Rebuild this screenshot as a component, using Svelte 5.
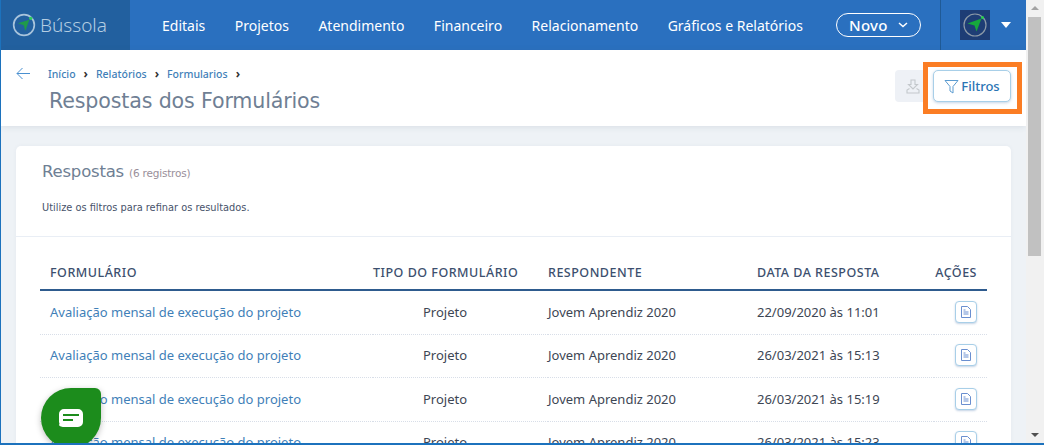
<script>
	const nav = ['Editais', 'Projetos', 'Atendimento', 'Financeiro', 'Relacionamento', 'Gráficos e Relatórios'];
	const rows = [
		{ data: '22/09/2020 às 11:01' },
		{ data: '26/03/2021 às 15:13' },
		{ data: '26/03/2021 às 15:19' },
		{ data: '26/03/2021 às 15:23' }
	];
</script>

<div class="window">
	<div class="page">
		<header class="topbar">
			<div class="brand">
				<svg width="24" height="24" viewBox="0 0 36 36" fill="none">
					<circle cx="18" cy="18" r="15.500" stroke="#a9c4dc" stroke-width="2.500" />
					<path d="M9 15.500 26 10 20 27 17.500 18.500Z" fill="#1f9a4a" />
					<circle cx="28" cy="8" r="2.500" fill="#2ecc5c" />
				</svg>
				<span>Bússola</span>
			</div>
			<nav>
				{#each nav as item}
					<span>{item}</span>
				{/each}
			</nav>
			<button class="novo">Novo
				<svg width="10" height="6" viewBox="0 0 10 6" fill="none"><path d="M1 1l4 3.500L9 1" stroke="#fff" stroke-width="1.500" /></svg>
			</button>
			<div class="user">
				<div class="avatar">
					<svg width="24" height="24" viewBox="0 0 24 24" fill="none">
						<circle cx="12" cy="12" r="11" stroke="#8d9aa8" stroke-width="1.200" />
						<path d="M4.500 10.500 18.500 5.500 13.500 18.500 11.500 12.500Z" fill="#16a83c" />
						<circle cx="19.500" cy="4.500" r="1.500" fill="#26d04c" />
					</svg>
				</div>
				<i class="caret"></i>
			</div>
		</header>

		<section class="subheader">
			<svg class="back" width="14" height="13" viewBox="0 0 14 13" fill="none"><path d="M6.500 1 1 6.500 6.500 12M1 6.500h13" stroke="#4a90d0" stroke-width="1" /></svg>
			<div class="heading">
				<div class="crumbs">
					<a>Início</a><b>›</b><a>Relatórios</a><b>›</b><a>Formularios</a><b>›</b>
				</div>
				<h1>Respostas dos Formulários</h1>
			</div>
			<div class="tools">
				<button class="download" aria-label="Baixar">
					<svg width="14" height="15" viewBox="0 0 14 15" fill="none" stroke="#c4c8cc" stroke-width="1.100">
						<path d="M5 1h4v4.500h2.500L7 10 2.500 5.500H5ZM3.500 9.500 1 11v3h12v-3l-2.500-1.500" />
					</svg>
				</button>
				<div class="highlight">
					<button class="filtros">
						<svg width="15" height="15" viewBox="0 0 15 15" fill="none" stroke="#5b9bd0" stroke-width="1"><path d="M1 1.500h13L9 7.500V14l-3-2V7.500Z" /></svg>
						Filtros
					</button>
				</div>
			</div>
		</section>

		<section class="card">
			<div class="card-head">
				<h2>Respostas <small>(6 registros)</small></h2>
				<p>Utilize os filtros para refinar os resultados.</p>
			</div>
			<div class="card-body">
				<table>
					<thead>
						<tr>
							<th class="c-form">FORMULÁRIO</th>
							<th class="c-tipo">TIPO DO FORMULÁRIO</th>
							<th class="c-resp">RESPONDENTE</th>
							<th class="c-data">DATA DA RESPOSTA</th>
							<th class="c-acao">AÇÕES</th>
						</tr>
					</thead>
					<tbody>
						{#each rows as row}
							<tr>
								<td><a>Avaliação mensal de execução do projeto</a></td>
								<td class="center">Projeto</td>
								<td>Jovem Aprendiz 2020</td>
								<td>{row.data}</td>
								<td class="right">
									<button class="doc" aria-label="Ver">
										<svg width="10" height="12" viewBox="0 0 10 12" fill="none" stroke="#6a8fd0" stroke-width="1">
											<path d="M.5.5h6l3 3v8h-9ZM2.500 6h5M2.500 8h5M2.500 4h2" />
										</svg>
									</button>
								</td>
							</tr>
						{/each}
					</tbody>
				</table>
			</div>
		</section>

		<button class="chat" aria-label="Chat">
			<svg width="24" height="18" viewBox="0 0 24 18"><path d="M5 0h14a5 5 0 0 1 5 5v8a5 5 0 0 1-5 5H6Q1 18 0 16q1-1 0-3V5a5 5 0 0 1 5-5Z" fill="#fff" /><path d="M4 6h16M4 11h10" stroke="#1c8c1c" stroke-width="2" /></svg>
		</button>
	</div>

	<div class="scrollbar">
		<i class="up"></i>
		<div class="thumb"></div>
		<i class="down"></i>
	</div>
</div>

<style>
	:global(body) {
		margin: 0;
		background: #eef2f6;
	}

	.window {
		width: 1044px;
		height: 445px;
		box-sizing: border-box;
		border-left: 1px solid #1c72bd;
		border-bottom: 2px solid #1c72bd;
		display: flex;
		overflow: hidden;
		font-family: "Noto Sans", sans-serif;
	}

	.page {
		flex: 1;
		min-width: 0;
		background: #eef2f6;
		position: relative;
		overflow: hidden;
	}

	.topbar {
		height: 50px;
		background: #2a70bf;
		display: flex;
		align-items: center;
		color: #fff;
		white-space: nowrap;
	}

	.brand {
		width: 129px;
		height: 50px;
		flex: none;
		background: #22609f;
		display: flex;
		align-items: center;
		gap: 4px;
		padding-left: 11px;
		box-sizing: border-box;
		color: #b4cde2;
		font-size: 19px;
		font-weight: 300;
	}

	nav {
		display: flex;
		gap: 29.500px;
		margin-left: 32px;
		font-size: 14px;
	}

	.novo {
		margin-left: 33px;
		width: 85px;
		height: 24px;
		flex: none;
		border: 1px solid #fff;
		border-radius: 12px;
		background: none;
		color: #fff;
		font: 500 15px "Noto Sans", sans-serif;
		letter-spacing: 0.3px;
		display: flex;
		align-items: center;
		justify-content: center;
		gap: 10px;
		padding: 0;
	}

	.user {
		margin-left: 19px;
		height: 50px;
		flex: 1;
		border-left: 1px solid #1f5a96;
		display: flex;
		align-items: center;
		padding-left: 19px;
		gap: 11px;
	}

	.avatar {
		width: 30px;
		height: 30px;
		background: #1e3d75;
		display: flex;
		align-items: center;
		justify-content: center;
	}

	.caret {
		border: 5.500px solid transparent;
		border-top: 6px solid #fff;
		border-bottom: 0;
	}

	.subheader {
		height: 76px;
		background: #fff;
		box-shadow: 0 1px 6px rgba(60, 80, 110, 0.12);
		display: flex;
		position: relative;
	}

	.back {
		margin: 17px 0 0 15px;
	}

	.heading {
		margin-left: 18px;
	}

	.crumbs {
		margin-top: 17px;
		font-size: 10.500px;
		line-height: 14px;
		display: flex;
		align-items: center;
	}

	.crumbs a {
		color: #3f7fb8;
		font-weight: 500;
	}

	.crumbs b {
		margin: 0 8px;
		font-size: 12px;
		line-height: 12px;
		color: #333;
	}

	h1 {
		margin: 8px 0 0 1px;
		font: 400 20.600px "DejaVu Sans", sans-serif;
		letter-spacing: -0.15px;
		color: #6f7f94;
	}

	.tools {
		margin-left: auto;
		margin-right: 4px;
		display: flex;
		align-items: flex-start;
		margin-top: 12px;
	}

	.download {
		width: 35px;
		height: 32px;
		margin-top: 8px;
		margin-right: -7px;
		background: #eef1f6;
		border: 0;
		border-radius: 4px;
		padding: 0;
		display: flex;
		align-items: center;
		justify-content: center;
	}

	.highlight {
		position: relative;
		background: #fff;
		border: 5px solid #fb7d24;
		padding: 3px 5px 7px;
		box-sizing: content-box;
		width: 79px;
		height: 32px;
	}

	.filtros {
		width: 78px;
		height: 32px;
		background: #fff;
		border: 1px solid #a8cfe8;
		border-radius: 5px;
		box-shadow: 0 1px 3px rgba(60, 110, 170, 0.3);
		color: #2a74b4;
		font: 500 13px "Noto Sans", sans-serif;
		display: flex;
		align-items: center;
		justify-content: center;
		gap: 2px;
		padding: 0;
	}

	.card {
		margin: 20px 15px 0;
		background: #fff;
		border-radius: 5px;
		box-shadow: 0 0 4px rgba(60, 80, 110, 0.05);
	}

	.card-head {
		height: 91px;
		box-sizing: border-box;
		padding: 16px 26px 0;
		border-bottom: 1px solid #e9eef5;
	}

	h2 {
		margin: 0;
		font: 400 16.500px "DejaVu Sans", sans-serif;
		letter-spacing: -0.2px;
		color: #6f7f94;
	}

	small {
		font: 400 10.500px "DejaVu Sans", sans-serif;
		color: #998f9a;
	}

	.card-head p {
		margin: 21px 0 0;
		font: 400 9.800px "DejaVu Sans", sans-serif;
		color: #47526a;
	}

	.card-body {
		padding: 16px 24px 0;
	}

	table {
		width: 100%;
		border-collapse: collapse;
		font-size: 13px;
		color: #3d4654;
	}

	th {
		height: 34px;
		padding: 2px 0 0;
		text-align: left;
		font: 500 12.500px "Noto Sans", sans-serif;
		letter-spacing: 0.5px;
		color: #3c4f6e;
		border-bottom: 2px solid #2e5b8e;
	}

	.c-form { width: 333px; padding-left: 10px; box-sizing: border-box; }
	.c-tipo { width: 175px; }
	.c-resp { width: 209px; }
	.c-data { width: 177px; }
	.c-acao { text-align: right; padding-right: 10px; }

	td {
		height: 41.500px;
		padding: 0 0 1px;
		border-bottom: 1px dotted #d8dee8;
	}

	td:first-child {
		padding-left: 10px;
	}

	td a {
		color: #3f7fb8;
	}

	.center {
		padding-left: 50px;
		box-sizing: border-box;
	}

	.right {
		text-align: right;
		padding-right: 10px;
	}

	.doc {
		width: 22px;
		height: 22px;
		background: #fff;
		border: 1px solid #a8cfe8;
		border-radius: 4px;
		box-shadow: 0 1px 2px rgba(60, 110, 170, 0.3);
		padding: 0;
		display: inline-flex;
		align-items: center;
		justify-content: center;
		vertical-align: middle;
	}

	.chat {
		position: absolute;
		left: 40px;
		top: 388px;
		width: 60px;
		height: 60px;
		padding: 0;
		border: 0;
		background: #1c8c1c;
		border-radius: 50% 6px 50% 50%;
		box-shadow: 0 2px 6px rgba(0, 0, 0, 0.25);
		display: flex;
		align-items: center;
		justify-content: center;
	}

	.scrollbar {
		width: 18px;
		background: #f1f1f1;
		position: relative;
		flex: none;
		display: flex;
		flex-direction: column;
		align-items: center;
	}

	.thumb {
		width: 13px;
		margin-right: 1px;
		height: 239px;
		background: #c1c1c1;
		margin-top: 17px;
	}

	.up, .down {
		position: absolute;
		border: 4px solid transparent;
		margin-right: 1px;
	}

	.up {
		top: 6px;
		border-bottom: 4px solid #a3a3a3;
		border-top: 0;
	}

	.down {
		bottom: 6px;
		border-top: 4px solid #505050;
		border-bottom: 0;
	}
</style>
